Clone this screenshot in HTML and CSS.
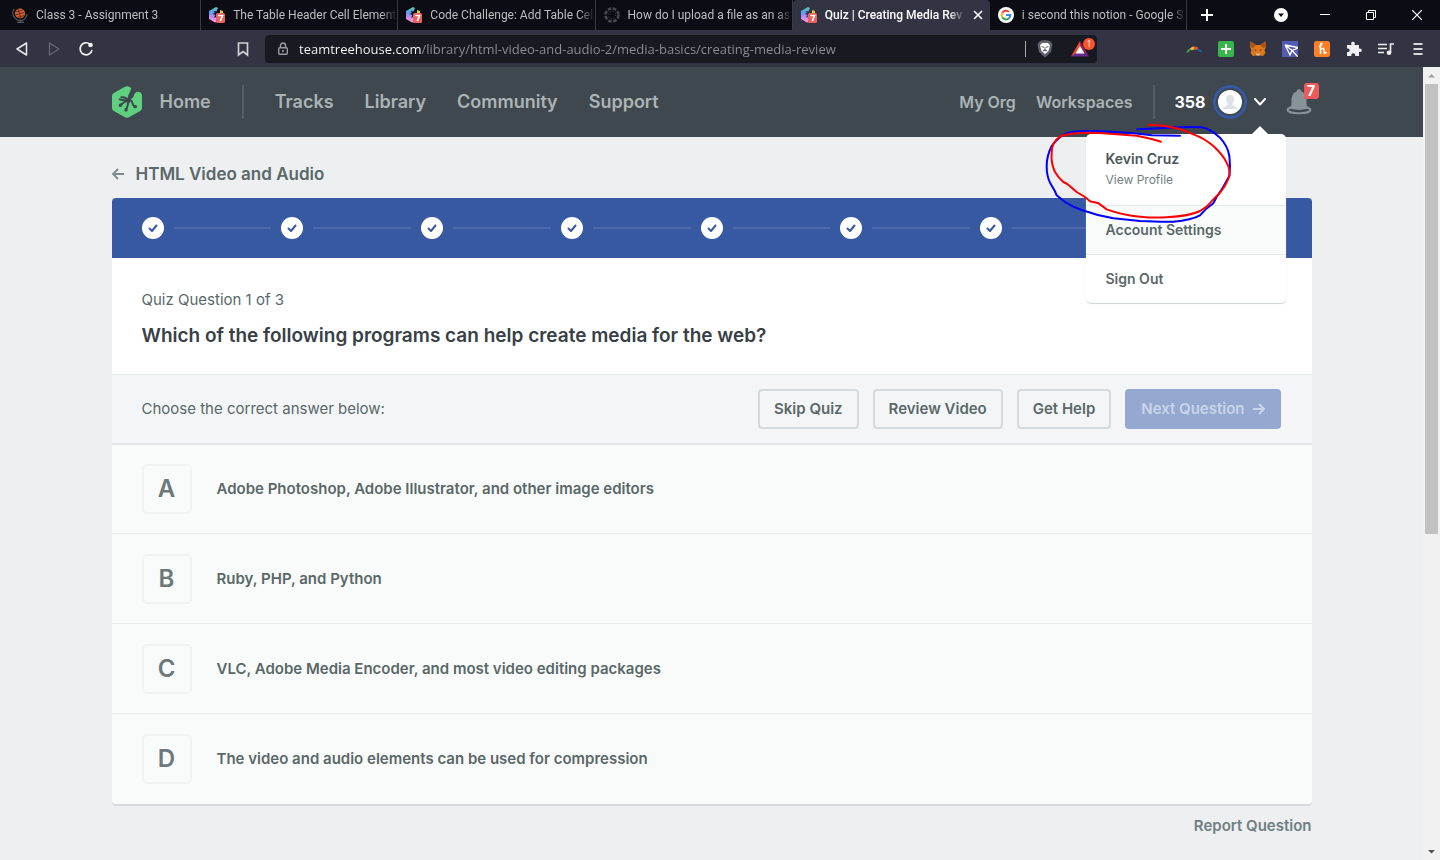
FILE: index.html
```html
<!DOCTYPE html>
<html lang="en">
<head>
<meta charset="utf-8">
<meta name="viewport" content="width=device-width, initial-scale=1">
<title>Quiz | Creating Media Review</title>
<link rel="stylesheet" href="styles.css">
</head>
<body>
<svg class="defs" aria-hidden="true">
  <defs>
    <linearGradient id="rainbow-left" x1="0" y1="0" x2="0" y2="1"><stop offset="0" stop-color="#5dc9a8"/><stop offset=".35" stop-color="#5a9cf0"/><stop offset=".6" stop-color="#b58cf0"/><stop offset="1" stop-color="#ff9ad8"/></linearGradient>
    <symbol id="treehouse" viewBox="0 0 16 16">
      <path d="M7 0L9 1L7.500 4.500L4.500 4L6 6L3.500 7L6.500 8L5 10.500L8 10V15L6 15.500L0 12V4Z" fill="url(#rainbow-left)"/>
      <path d="M11 3L14 4V7H11Z" fill="#e3cf32"/>
      <rect x="7" y="6" width="9" height="10" rx="1.500" fill="#e9605f"/>
      <path d="M9.300 8.500H13.500L11.300 14" fill="none" stroke="#fff" stroke-width="1.700"/>
    </symbol>
    <symbol id="check" viewBox="0 0 22 22"><circle cx="11" cy="11" r="11" fill="#fff"/><path d="M7.500 11.500L10 14L14.500 8.500" fill="none" stroke="#3659a2" stroke-width="2" stroke-linecap="round" stroke-linejoin="round"/></symbol>
  </defs>
</svg>

<div class="tabstrip">
  <div class="tabs" role="tablist">
    <button class="tab" role="tab" type="button">
      <svg class="favicon" viewBox="0 0 16 16"><circle cx="8" cy="6.500" r="5" fill="#d9622f"/><path d="M4 5L11 3M3.500 8L12 5.500M5 10.500L12 8.500M6 2L9 11" stroke="#4b1d18" stroke-width=".8"/><path d="M2 2A7.500 7.500 0 0 0 12 12.500Q15 10 15 7M8.500 14V15M5 15.300H12" fill="none" stroke="#56565c" stroke-width="1.200"/></svg>
      <span class="tab-title">Class 3 - Assignment 3</span>
    </button>
    <button class="tab" role="tab" type="button"><svg class="favicon"><use href="#treehouse"/></svg><span class="tab-title">The Table Header Cell Element</span></button>
    <button class="tab" role="tab" type="button"><svg class="favicon"><use href="#treehouse"/></svg><span class="tab-title">Code Challenge: Add Table Cel</span></button>
    <button class="tab" role="tab" type="button">
      <svg class="favicon" viewBox="0 0 16 16"><circle cx="8" cy="8" r="6.500" fill="none" stroke="#48484d" stroke-width="2.600" stroke-dasharray="3.600 1.505"/><circle cx="8" cy="8" r="3.700" fill="none" stroke="#48484d" stroke-width="1" stroke-dasharray="1 1.900"/></svg>
      <span class="tab-title">How do I upload a file as an as</span>
    </button>
    <button class="tab tab-active" role="tab" type="button" aria-selected="true"><svg class="favicon"><use href="#treehouse"/></svg><span class="tab-title">Quiz | Creating Media Rev</span>
      <svg class="tab-close" viewBox="0 0 10 10"><path d="M1 1L9 9M9 1L1 9" stroke="#fff" stroke-width="1.600"/></svg>
    </button>
    <button class="tab" role="tab" type="button">
      <svg class="favicon" viewBox="0 0 16 16"><circle cx="8" cy="8" r="8" fill="#fff"/><g fill="none" stroke-width="2"><path d="M4.300 5.800A4.300 4.300 0 0 1 11 4.900" stroke="#ea4335"/><path d="M4.300 10.200A4.300 4.300 0 0 1 4.300 5.800" stroke="#fbbc05"/><path d="M11 11.200A4.300 4.300 0 0 1 4.300 10.200" stroke="#34a853"/><path d="M8 8H12.300A4.300 4.300 0 0 1 11 11.200" stroke="#4285f4"/></g></svg>
      <span class="tab-title">i second this notion - Google S</span>
    </button>
  </div>
  <button class="new-tab" type="button" aria-label="New tab"><svg width="12" height="12" viewBox="0 0 12 12"><path d="M6 0V12M0 6H12" stroke="#fff" stroke-width="2"/></svg></button>
  <div class="window-buttons">
    <button type="button" aria-label="Search tabs"><svg width="14" height="14" viewBox="0 0 14 14"><circle cx="7" cy="7" r="7" fill="#fff"/><path d="M4 5.500H10L7 9Z" fill="#0c0c14"/></svg></button>
    <button type="button" aria-label="Minimize"><svg width="10" height="10" viewBox="0 0 10 10"><path d="M0 4.500H10" stroke="#fff"/></svg></button>
    <button type="button" aria-label="Restore"><svg width="10" height="10" viewBox="0 0 10 10"><path d="M.5 2.500H7.500V9.500H.5ZM2.500 2.500V.5H9.500V7.500H7.500" fill="none" stroke="#fff"/></svg></button>
    <button type="button" aria-label="Close"><svg width="10" height="10" viewBox="0 0 10 10"><path d="M0 0L10 10M10 0L0 10" stroke="#fff" stroke-width="1.200"/></svg></button>
  </div>
</div>

<div class="toolbar">
  <div class="history">
    <button type="button" aria-label="Back"><svg width="16" height="16" viewBox="0 0 16 16"><path d="M12.500 2V14L3 8Z" fill="none" stroke="#e8e8ea" stroke-width="1.500" stroke-linejoin="round"/></svg></button>
    <button type="button" aria-label="Forward"><svg width="16" height="16" viewBox="0 0 16 16"><path d="M3.500 2V14L13 8Z" fill="none" stroke="#66687a" stroke-width="1.300" stroke-linejoin="round"/></svg></button>
    <button type="button" aria-label="Reload"><svg width="16" height="16" viewBox="0 0 16 16"><path d="M12 3.200A6 6 0 1 0 14 9" fill="none" stroke="#f0f0f2" stroke-width="1.700"/><circle cx="12.500" cy="4" r="2.300" fill="#f0f0f2"/></svg></button>
  </div>
  <button class="bookmark" type="button" aria-label="Bookmark"><svg width="16" height="16" viewBox="0 0 16 16"><path d="M3.500 2H12.500V14L8 10.500L3.500 14Z" fill="none" stroke="#cfcfd4" stroke-width="1.700"/></svg></button>
  <div class="address">
    <svg width="12" height="14" viewBox="0 0 12 14"><path d="M3.500 6V3.500A2.500 2.500 0 0 1 8.500 3.500V6" fill="none" stroke="#9a9ba0" stroke-width="1.500"/><rect x="1.700" y="5.700" width="8.600" height="6.600" rx="1" fill="none" stroke="#9a9ba0" stroke-width="1.400"/><circle cx="6" cy="9" r="1.100" fill="#9a9ba0"/></svg>
    <input class="url" type="text" aria-label="Address" spellcheck="false" value="teamtreehouse.com/library/html-video-and-audio-2/media-basics/creating-media-review">
    <span class="address-divider"></span>
    <button type="button" aria-label="Shields"><svg width="16" height="18" viewBox="0 0 16 18"><path d="M3 1L8 0L13 1L15.500 4L14 12L8 17.500L2 12L.5 4Z" fill="#60606d"/><path d="M5 3H11L13 5.500L11.500 11L8 14L4.500 11L3 5.500Z" fill="#fff"/><path d="M4.500 6.500L7 7.300M11.500 6.500L9 7.300M8 7V10M6 11L8 10L10 11" stroke="#60606d" stroke-width="1"/></svg></button>
    <button class="rewards" type="button" aria-label="Rewards"><svg width="18" height="16" viewBox="0 0 18 16"><path d="M9 0L0 15.500L9 10Z" fill="#ff4724"/><path d="M9 0L18 15.500L9 8Z" fill="#9e1f63"/><path d="M0 15.500H18L12 11H6Z" fill="#662d91"/><path d="M9 5L4.500 12.500H13.500Z" fill="#fff"/></svg><span class="rewards-count">1</span></button>
  </div>
  <div class="extensions">
    <button type="button" aria-label="Color extension"><svg width="16" height="16" viewBox="0 0 16 16"><g fill="none" stroke-width="3"><path d="M1 11.500Q3 8.500 5 8" stroke="#3a9a50" stroke-width="2"/><path d="M5 8.500Q6.500 7 8 7" stroke="#f4b72c"/><path d="M8 7Q10 7 11.500 8" stroke="#e0523c"/><path d="M11.500 8.500Q14 9 15.500 11" stroke="#1663a8" stroke-width="2"/></g></svg></button>
    <button type="button" aria-label="Add extension"><svg width="16" height="16" viewBox="0 0 16 16"><rect width="16" height="16" rx="2" fill="#39b54a"/><path d="M8 3V13M3 8H13" stroke="#fff" stroke-width="2"/></svg></button>
    <button type="button" aria-label="Wallet"><svg width="16" height="16" viewBox="0 0 16 16"><path d="M.5 .5L6 4H10L15.500 .5L16 6L14.500 9L15.500 12L13 15L10 14.500H6L3 15L.5 12L1.500 9L0 6Z" fill="#e2761b"/><path d="M.5 .5L6 4L3 7L0 6ZM15.500 .5L10 4L13 7L16 6Z" fill="#a85418"/><path d="M3.500 8.500L6 8.800L6.500 10ZM12.500 8.500L10 8.800L9.500 10Z" fill="#233447"/><path d="M6 12.500H10L9.500 14.500H6.500Z" fill="#d7c1b3"/></svg></button>
    <button type="button" aria-label="Paper plane"><svg width="16" height="16" viewBox="0 0 16 16"><rect width="16" height="16" fill="#535bb5"/><path d="M3 4L16 6.500M3 4L8 14L10 9.500L16 16M3 4L10 9.500L16 7" fill="none" stroke="#fff" stroke-width="1.300"/></svg></button>
    <button type="button" aria-label="Honey"><svg width="16" height="16" viewBox="0 0 16 16"><rect width="16" height="16" rx="2.500" fill="#ff7f24"/><path d="M5 6Q8 4 8 2.500Q6.500 1.500 6.500 5V13M6.500 9Q9.500 6 10 8.500V11.500Q10.500 13.500 12.500 11" fill="none" stroke="#fff" stroke-width="1.500"/></svg></button>
    <button type="button" aria-label="Extensions"><svg width="16" height="16" viewBox="0 0 16 16"><path d="M1 4H5.500Q4.500 .8 7 .8T8.500 4H13V7.500Q15.800 7 15.800 9.200T13 11V15H9.200Q9.500 12.200 7.300 12.200T5.300 15H1V11Q3.700 11.300 3.700 9.200T1 7.500Z" fill="#f0f0f2"/></svg></button>
    <button type="button" aria-label="Media"><svg width="16" height="16" viewBox="0 0 16 16"><path d="M0 3.500H9M0 7.500H9M0 11.500H6M12.500 12V3H16" fill="none" stroke="#f0f0f2" stroke-width="1.600"/><circle cx="11" cy="11.800" r="2.300" fill="#f0f0f2"/></svg></button>
    <button type="button" aria-label="Menu"><svg width="16" height="16" viewBox="0 0 16 16"><path d="M3.500 3H12.500M3.500 8H12.500M3.500 13H12.500" stroke="#d8d8dc" stroke-width="1.800"/></svg></button>
  </div>
</div>

<div class="viewport">
  <div class="page">
    <header class="site-header">
      <div class="container header-inner">
        <a class="logo" href="#" aria-label="Treehouse">
          <svg width="30" height="32" viewBox="0 0 90 96"><path d="M39 2Q45 -1 51 2L55 4Q59 7 56 13L48 30Q50 38 58 38Q66 34 67 24Q74 13 86 20Q90 23 90 28V66Q90 71 86 74L51 94Q45 97 39 94L4 74Q0 71 0 66V30Q0 25 4 22Z" fill="#5fcf80"/><g fill="none" stroke="#3f474f" stroke-linecap="round" stroke-linejoin="round"><path d="M53 36L49 46" stroke-width="11"/><path d="M46 39Q38 32 28 34M46 42Q34 44 23 40M46 44Q36 48 25 58M49 46Q48 60 42 72M54 42Q61 45 62 53Q64 60 70 63" stroke-width="6"/><path d="M42 72V71M25 58L26 57M69 62H70" stroke-width="10"/></g></svg>
        </a>
        <nav class="main-nav">
          <a href="#">Home</a>
          <span class="rule"></span>
          <a href="#">Tracks</a>
          <a href="#">Library</a>
          <a href="#">Community</a>
          <a href="#">Support</a>
        </nav>
        <div class="account">
          <a href="#">My Org</a>
          <a href="#">Workspaces</a>
          <span class="rule"></span>
          <button class="profile" type="button">
            <span>358</span>
            <svg width="34" height="34" viewBox="0 0 34 34"><circle cx="17" cy="17" r="15.500" fill="#3f474f" stroke="#3659a2" stroke-width="3"/><circle cx="17" cy="17" r="12" fill="#fff"/><path d="M17 10Q21 10 21 14Q21 17 19 19Q20 21 24 22.500V24H10V22.500Q14 21 15 19Q13 17 13 14Q13 10 17 10Z" fill="#dfe1e2"/></svg>
            <svg width="12" height="8" viewBox="0 0 12 8"><path d="M1 1L6 6.500L11 1" fill="none" stroke="#fff" stroke-width="2" stroke-linecap="round" stroke-linejoin="round"/></svg>
          </button>
          <button class="bell" type="button" aria-label="Notifications">
            <svg width="26" height="26" viewBox="0 0 26 26"><ellipse cx="13" cy="21" rx="11.500" ry="3.200" fill="none" stroke="#879396" stroke-width="2"/><path d="M13 0Q15 0 15.500 2.500Q20 4 20.500 10V15Q20.500 17 22.500 19Q18 21 13 21T3.500 19Q5.500 17 5.500 15V10Q6 4 10.500 2.500Q11 0 13 0Z" fill="#879396"/></svg>
            <span class="bell-count">7</span>
          </button>
        </div>
        <div class="menu">
          <a class="menu-profile" href="#"><strong>Kevin Cruz</strong><span>View Profile</span></a>
          <a class="menu-item menu-item-tint" href="#">Account Settings</a>
          <a class="menu-item" href="#">Sign Out</a>
          <svg class="scribble" viewBox="300 150 600 330" aria-hidden="true">
            <g fill="none" stroke-width="6" stroke-linecap="round" stroke-linejoin="round">
              <path stroke="#00f" d="M720 209L635 208Q560 197 440 195Q405 195 380 202Q352 215 335 240Q320 270 320 300Q320 330 330 350L344 374L350 388L375 408L400 422L425 432Q470 448 520 457L600 465Q660 468 700 467Q755 462 780 448L797 430L820 412L830 393Q850 365 868 330Q872 300 868 270Q863 240 840 215Q810 188 785 184Q750 182 720 184L592 190"/>
              <path stroke="#f00" d="M663 227L635 219L590 209L520 204Q450 198 420 201Q380 203 360 212Q334 230 335 260Q332 290 345 318Q355 335 370 348L382 354L410 378L435 393L450 406L476 412L500 430Q550 448 600 452Q640 456 680 454Q750 450 780 435L800 422L825 395Q856 368 868 330Q872 312 860 290Q850 268 820 240Q792 216 760 205Q725 188 700 185L670 179L625 176"/>
            </g>
          </svg>
        </div>
      </div>
    </header>

    <main class="container content">
      <a class="back" href="#"><svg width="12" height="12" viewBox="0 0 12 12"><path d="M12 6H1M6 1L1 6L6 11" fill="none" stroke="#7d8b8e" stroke-width="1.800"/></svg>HTML Video and Audio</a>
      <form class="quiz">
        <div class="steps">
          <svg><use href="#check"/></svg><span></span><svg><use href="#check"/></svg><span></span><svg><use href="#check"/></svg><span></span><svg><use href="#check"/></svg><span></span><svg><use href="#check"/></svg><span></span><svg><use href="#check"/></svg><span></span><svg><use href="#check"/></svg><span></span><svg><use href="#check"/></svg><span></span><svg><use href="#check"/></svg>
        </div>
        <div class="question">
          <p>Quiz Question 1 of 3</p>
          <h1>Which of the following programs can help create media for the web?</h1>
        </div>
        <div class="actions">
          <p>Choose the correct answer below:</p>
          <button class="btn" type="button">Skip Quiz</button>
          <button class="btn" type="button">Review Video</button>
          <button class="btn" type="button">Get Help</button>
          <button class="btn btn-next" type="submit" disabled>Next Question <svg width="12" height="12" viewBox="0 0 12 12"><path d="M0 6H11M6 1L11 6L6 11" fill="none" stroke="#c9d4ea" stroke-width="2"/></svg></button>
        </div>
        <div class="answers">
          <label class="answer"><input type="radio" name="answer" value="A"><span class="letter">A</span><span>Adobe Photoshop, Adobe Illustrator, and other image editors</span></label>
          <label class="answer"><input type="radio" name="answer" value="B"><span class="letter">B</span><span>Ruby, PHP, and Python</span></label>
          <label class="answer"><input type="radio" name="answer" value="C"><span class="letter">C</span><span>VLC, Adobe Media Encoder, and most video editing packages</span></label>
          <label class="answer"><input type="radio" name="answer" value="D"><span class="letter">D</span><span>The video and audio elements can be used for compression</span></label>
        </div>
      </form>
      <a class="report" href="#">Report Question</a>
    </main>
  </div>
  <div class="scrollbar" aria-hidden="true">
    <svg width="17" height="17" viewBox="0 0 17 17"><path d="M5 10.500L8.500 7L12 10.500Z" fill="#a3a3a3"/></svg>
    <span class="thumb"></span><span class="track"></span>
    <svg width="17" height="17" viewBox="0 0 17 17"><path d="M5 7L8.500 10.500L12 7Z" fill="#505050"/></svg>
  </div>
</div>
</body>
</html>
```
FILE: styles.css
```css
* { box-sizing: border-box; }

body {
  margin: 0;
  min-height: 100vh;
  display: flex;
  flex-direction: column;
  background: #edeff0;
  color: #596869;
  font: 600 15px/20px Inter, "Liberation Sans", sans-serif;
}

a { color: inherit; text-decoration: none; }
p, h1 { margin: 0; }
button {
  border: 0;
  padding: 0;
  background: none;
  color: inherit;
  font: inherit;
  display: flex;
  align-items: center;
}
svg { display: block; flex: none; }
.defs { position: absolute; width: 0; height: 0; }

/* Browser tabs */
.tabstrip {
  display: flex;
  height: 30px;
  padding-left: 4px;
  background: #0c0c14;
  color: #bdbdc1;
  font: 400 12px/16px Roboto, "Noto Sans", sans-serif;
}
.tabs { display: flex; flex: 0 1 1183px; min-width: 0; }
.tab {
  flex: 1 1 0;
  min-width: 0;
  gap: 8px;
  padding: 0 0 0 8px;
  border-right: 1px solid #3a3a42;
}
.tab-active {
  background: #323443;
  border-color: #323443;
  border-radius: 4px 4px 0 0;
  color: #fff;
  font-weight: 500;
}
.favicon { width: 16px; height: 16px; }
.tab-title {
  flex: 1;
  overflow: hidden;
  white-space: nowrap;
  text-align: left;
  -webkit-mask-image: linear-gradient(to left, transparent, #000 16px);
  mask-image: linear-gradient(to left, transparent, #000 16px);
}
.tab-close { width: 10px; height: 10px; margin-right: 6px; }
.new-tab { padding: 0 14px; }
.window-buttons { display: flex; margin-left: auto; }
.window-buttons button { width: 46px; justify-content: center; }
.window-buttons button:first-child { width: 42px; }

/* Browser toolbar */
.toolbar {
  display: flex;
  align-items: center;
  height: 37px;
  padding: 0 14px;
  background: #323443;
}
.history { display: flex; gap: 16px; }
.bookmark { margin-left: 141px; }
.address {
  display: flex;
  align-items: center;
  flex: 0 1 832px;
  min-width: 0;
  height: 28px;
  margin-left: 14px;
  padding-left: 12px;
  border-radius: 4px;
  background: #181a22;
}
.url {
  flex: 1;
  min-width: 0;
  margin-left: 10px;
  padding: 0;
  border: 0;
  outline: 0;
  font: 400 13px/20px "Open Sans", "Noto Sans", sans-serif;
  color: transparent;
  background: linear-gradient(to right, #fff 122px, #8d9096 122px);
  -webkit-background-clip: text;
  background-clip: text;
}
.address-divider { width: 1px; height: 16px; margin-right: 11px; background: #a5a6aa; }
.rewards { position: relative; margin-left: 18px; padding-right: 8px; }
.rewards-count {
  position: absolute;
  top: -3px;
  right: 2px;
  width: 12px;
  border-radius: 6px;
  background: #fb542b;
  color: #fff;
  font: 400 9px/12px "Open Sans", sans-serif;
  text-align: center;
}
.extensions { display: flex; gap: 16px; margin-left: auto; }

/* Viewport and scrollbar */
.viewport { flex: 1; display: flex; }
.page { flex: 1; min-width: 0; }
.scrollbar {
  display: flex;
  flex-direction: column;
  align-items: center;
  width: 17px;
  background: #f1f1f1;
}
.thumb { flex: 450; width: 13px; background: #c1c1c1; }
.track { flex: 309; }
.container { max-width: 1200px; margin: 0 auto; }

/* Site header */
.site-header { background: #3f474f; color: #abb4b4; }
.header-inner {
  position: relative;
  display: flex;
  align-items: center;
  height: 70px;
}
.main-nav {
  display: flex;
  align-items: center;
  gap: 31px;
  margin-left: 18px;
  font-size: 18px;
}
.rule { width: 2px; height: 34px; background: #545d64; }
.account {
  display: flex;
  align-items: center;
  gap: 20px;
  margin-left: auto;
  font-size: 16px;
}
.profile { gap: 7px; color: #fff; font-weight: 700; }
.bell { position: relative; }
.bell-count {
  position: absolute;
  top: -6px;
  right: -7px;
  width: 15px;
  border-radius: 3px;
  background: #ed5a5a;
  color: #fff;
  font-size: 14px;
  font-weight: 700;
  line-height: 16px;
  text-align: center;
}

/* Account menu */
.menu {
  position: absolute;
  z-index: 2;
  top: 67px;
  right: 26px;
  width: 200px;
  border-radius: 5px;
  background: #fff;
  box-shadow: 0 1px 1px #cdd2d4;
  color: #596869;
  font-size: 14px;
}
.menu::before {
  content: "";
  position: absolute;
  top: -8px;
  right: 18px;
  border: 8px solid transparent;
  border-top: 0;
  border-bottom-color: #fff;
}
.menu-profile { display: block; padding: 15px 20px; height: 71px; color: #4b585b; }
.menu-profile strong { display: block; font-weight: 600; }
.menu-profile span { display: block; font-size: 12px; font-weight: 400; line-height: 22px; color: #717f82; }
.menu-item { display: block; padding: 14px 20px; border-top: 1px solid #e3e7e8; }
.menu-item-tint { background: #f9fbfa; }
.scribble {
  position: absolute;
  top: -18px;
  left: -46px;
  width: 200px;
  height: 110px;
  pointer-events: none;
}

/* Quiz */
.content { display: flex; flex-direction: column; padding: 26px 0 14px; }
.back { display: flex; align-items: center; gap: 12px; height: 22px; font-size: 17px; }
.quiz {
  margin-top: 13px;
  border-radius: 4px;
  background: #fff;
  box-shadow: 0 2px 0 #d5dadb;
  overflow: hidden;
}
.steps {
  display: flex;
  align-items: center;
  gap: 10px;
  padding: 19px 30px;
  background: #3659a2;
}
.steps svg { width: 22px; height: 22px; }
.steps span { flex: 1; height: 2px; background: #4b6bae; }
.question { padding: 32px 30px 26px; }
.question p { font-weight: 400; }
.question h1 { margin-top: 14px; color: #384047; font-size: 19px; font-weight: 600; line-height: 24px; }
.actions {
  display: flex;
  align-items: center;
  gap: 14px;
  padding: 14px 31px 14px 30px;
  border-top: 1px solid #e6e9ea;
  border-bottom: 2px solid #e3e6e8;
  background: #f3f5f7;
}
.actions p { flex: 1; font-weight: 400; }
.btn {
  height: 40px;
  padding: 0 14px;
  border: 2px solid #d3dade;
  border-radius: 4px;
  white-space: nowrap;
}
.btn-next { gap: 8px; border-color: #95a8cf; background: #95a8cf; color: #c9d4ea; }
.answers { background: #f9fbfa; }
.answer {
  display: flex;
  align-items: center;
  gap: 25px;
  padding: 20px 30px 19px;
  border-bottom: 1px solid #e9eced;
}
.answer:first-child { padding-top: 19px; }
.answer:last-child { padding-bottom: 20px; border-bottom: 0; }
.answer input { position: absolute; opacity: 0; }
.letter {
  display: grid;
  place-items: center;
  width: 50px;
  height: 50px;
  border: 2px solid #f1f3f3;
  border-radius: 5px;
  color: #6b797b;
  font-size: 24px;
}
.report { align-self: flex-end; margin-top: 12px; color: #6f7f82; }
```
